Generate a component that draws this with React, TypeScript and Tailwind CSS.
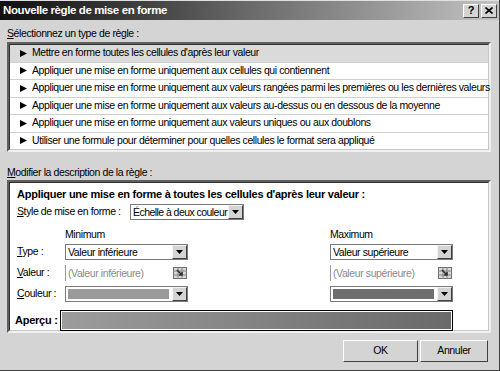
import React from "react";

const Arrow = () => (
  <svg width="7" height="7" viewBox="0 0 7 7" className="shrink-0">
    <path d="M0 0 L7 3.5 L0 7 Z" fill="#000" />
  </svg>
);

const DropBtn = () => (
  <div className="w-[15px] h-[14px] bg-[#d4d4d4] border border-t-[#f4f4f4] border-l-[#f4f4f4] border-r-[#404040] border-b-[#404040] flex items-center justify-center shrink-0">
    <svg width="7" height="4" viewBox="0 0 7 4">
      <path d="M0 0 H7 L3.5 4 Z" fill="#000" />
    </svg>
  </div>
);

const RangeIcon = () => (
  <div className="w-[16px] h-[14px] flex items-center justify-center shrink-0">
    <svg width="14" height="12" viewBox="0 0 14 12">
      <rect x="0.5" y="0.5" width="13" height="11" fill="#d8d8d8" stroke="#707070" />
      <path d="M0 4 H14 M0 8 H14 M5 0 V12 M9 0 V12" stroke="#808080" strokeWidth="1" />
      <path d="M4 3 L9 8 M9 5 V8 H6" stroke="#303030" strokeWidth="1.5" fill="none" />
    </svg>
  </div>
);

const Dropdown = ({ text, w, swatch, tight }: { text?: string; w: string; swatch?: string; tight?: boolean }) => (
  <div className={`${w} h-[16px] bg-white border border-[#7a7a7a] flex items-center pl-[2px] shrink-0`}>
    {swatch ? (
      <div className="flex-1 h-[10px] mr-[3px]" style={{ background: swatch }} />
    ) : (
      <span className={`flex-1 overflow-hidden whitespace-nowrap leading-[13px] ${tight ? "tracking-[-0.55px]" : ""}`}>{text}</span>
    )}
    <DropBtn />
  </div>
);

const RangeInput = ({ text }: { text: string }) => (
  <div className="w-[123px] h-[16px] bg-white flex items-center pl-[2px] shrink-0 border-l border-[#9a9a9a]">
    <span className="flex-1 text-[#8a8a8a] leading-none whitespace-nowrap">{text}</span>
    <RangeIcon />
  </div>
);

const U = ({ c }: { c: string }) => <span className="underline underline-offset-[1px]">{c}</span>;

const rules = [
  "Mettre en forme toutes les cellules d'après leur valeur",
  "Appliquer une mise en forme uniquement aux cellules qui contiennent",
  "Appliquer une mise en forme uniquement aux valeurs rangées parmi les premières ou les dernières valeurs",
  "Appliquer une mise en forme uniquement aux valeurs au-dessus ou en dessous de la moyenne",
  "Appliquer une mise en forme uniquement aux valeurs uniques ou aux doublons",
  "Utiliser une formule pour déterminer pour quelles cellules le format sera appliqué",
];

const btn =
  "bg-[#d4d4d4] border border-t-white border-l-white border-r-[#404040] border-b-[#404040] flex items-center justify-center";

export default function App() {
  return (
    <div
      className="w-[500px] h-[371px] bg-[#d4d4d4] border-r border-b border-[#404040] overflow-hidden text-[10.5px] text-black tracking-[-0.4px]"
      style={{ fontFamily: '"Liberation Sans", Arial, sans-serif' }}
    >
      <div className="h-[20px] bg-gradient-to-r from-[#101010] via-[#6a6a6a] to-[#c4c4c4] flex items-center justify-between pl-[3px] pr-[2px] border-t border-[#e0e0e0]">
        <span className="text-white font-bold text-[11.5px] tracking-[-0.4px]">Nouvelle règle de mise en forme</span>
        <div className="flex gap-[2px]">
          <div className={`w-[16px] h-[14px] ${btn} font-bold text-[11px] leading-none`}>?</div>
          <div className={`w-[16px] h-[14px] ${btn}`}>
            <svg width="8" height="7" viewBox="0 0 8 7"><path d="M0.5 0.5 L7.5 6.5 M7.5 0.5 L0.5 6.5" stroke="#000" strokeWidth="1.6" /></svg>
          </div>
        </div>
      </div>

      <div className="px-[7px] pr-[8px]">
        <div className="h-[22px] pt-[7px] leading-[13px]">
          <U c="S" />électionnez un type de règle :
        </div>
        <div className="h-[110px] border-2 border-t-[#606060] border-l-[#606060] border-r-[#f0f0f0] border-b-[#f0f0f0] flex flex-col">
          <div className="flex-1 flex flex-col bg-white border border-t-[#303030] border-l-[#303030] border-r-[#c8c8c8] border-b-[#c8c8c8]">
            {rules.map((r, i) => (
              <div
                key={i}
                className={`flex-1 flex items-center gap-[5px] pl-[10px] whitespace-nowrap border-b border-[#d0d0d0] last:border-b-0 ${i === 0 ? "bg-[#dadada]" : "bg-white"}`}
              >
                <Arrow />
                <span>{r}</span>
              </div>
            ))}
          </div>
        </div>

        <div className="h-[28px] pt-[14px] leading-[13px]">
          <U c="M" />odifier la description de la règle :
        </div>
        <div className="h-[153px] border-2 border-t-[#606060] border-l-[#606060] border-r-[#f0f0f0] border-b-[#f0f0f0]">
          <div className="h-full bg-white border border-t-[#303030] border-l-[#303030] border-r-[#c8c8c8] border-b-[#c8c8c8] pl-[7px] pt-[4px]">
            <div className="font-bold text-[11px] leading-[14px] tracking-[-0.25px] whitespace-nowrap">
              Appliquer une mise en forme à toutes les cellules d'après leur valeur :
            </div>
            <div className="flex items-center mt-[3px] h-[16px]">
              <span className="w-[113px] whitespace-nowrap"><U c="S" />tyle de mise en forme :</span>
              <Dropdown w="w-[114px]" text="Échelle à deux couleur" tight />
            </div>
            <div className="flex h-[22px] items-end pb-[1px] mt-[2px]">
              <span className="ml-[48px] w-[265px]">Minimum</span>
              <span>Maximum</span>
            </div>
            <div className="flex flex-col gap-[5px]">
              <div className="flex items-center h-[16px]">
                <span className="w-[48px]"><U c="T" />ype :</span>
                <Dropdown w="w-[123px]" text="Valeur inférieure" />
                <span className="w-[142px]" />
                <Dropdown w="w-[123px]" text="Valeur supérieure" />
              </div>
              <div className="flex items-center h-[16px]">
                <span className="w-[48px]"><U c="V" />aleur :</span>
                <RangeInput text="(Valeur inférieure)" />
                <span className="w-[142px]" />
                <RangeInput text="(Valeur supérieure)" />
              </div>
              <div className="flex items-center h-[16px]">
                <span className="w-[48px]"><U c="C" />ouleur :</span>
                <Dropdown w="w-[123px]" swatch="#9a9a9a" />
                <span className="w-[142px]" />
                <Dropdown w="w-[123px]" swatch="#6e6e6e" />
              </div>
            </div>
            <div className="flex items-center mt-[8px] h-[21px] -ml-[2px]">
              <span className="font-bold text-[11px] w-[45px] tracking-[-0.25px] whitespace-nowrap">Aperçu :</span>
              <div className="w-[393px] h-[21px] border border-black p-[1px] bg-white">
                <div className="w-full h-full bg-gradient-to-r from-[#9c9c9c] to-[#6a6a6a]" />
              </div>
            </div>
          </div>
        </div>

        <div className="flex justify-end gap-[2px] mt-[7px] pr-[3px]">
          <div className={`w-[75px] h-[22px] ${btn}`}>OK</div>
          <div className={`w-[68px] h-[22px] ${btn}`}>Annuler</div>
        </div>
      </div>
    </div>
  );
}
